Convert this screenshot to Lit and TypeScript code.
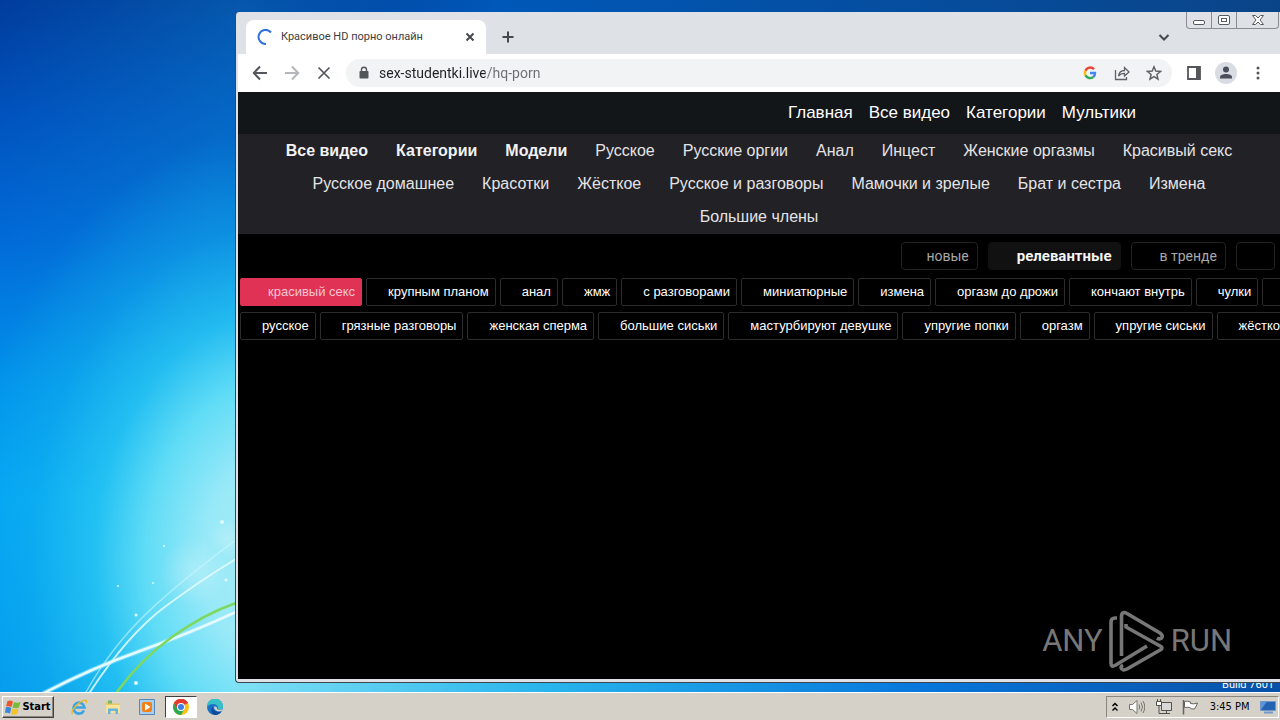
import { LitElement, html, css, svg } from "lit";
import { customElement } from "lit/decorators.js";
import { classMap } from "lit/directives/class-map.js";

@customElement("desk-wallpaper")
class DeskWallpaper extends LitElement {
  static styles = css`
    :host {
      display: block;
      background:
        radial-gradient(ellipse 320px 430px at 280px 560px, #a8ecf6 0%, #98e9f8 24%, #60dcf6 42%, #2ccaf4c0 58%, #18b8f060 78%, #14b8f000 100%),
        linear-gradient(100deg, #ffffff00 0px, #14a8dc40 240px, #ffffff00 560px),
        linear-gradient(180deg, #003c9c 0%, #0050bc 16%, #0068d8 35%, #0090ec 55%, #00a4f6 72%, #0096f0 100%);
    }
    .glow {
      display: block;
      width: 100%;
      height: 100%;
    }
  `;
  render() {
    return html`<svg class="glow" viewBox="0 0 1280 692" preserveAspectRatio="xMinYMax slice" aria-hidden="true">
      <defs>
        <linearGradient id="top" x1="0" x2="1"><stop offset="0" stop-color="#0048a8" stop-opacity="0" /><stop offset=".25" stop-color="#0058b8" /><stop offset="1" stop-color="#0a4488" /></linearGradient>
        <linearGradient id="low" x1="0" x2="1"><stop offset="0" stop-color="#7fe0f4" /><stop offset=".3" stop-color="#28b4ec" /><stop offset=".65" stop-color="#0878dc" /><stop offset="1" stop-color="#0850a8" /></linearGradient>
        <radialGradient id="orb"><stop offset="0" stop-color="#d8f6fa" stop-opacity=".35" /><stop offset="1" stop-color="#d8f6fa" stop-opacity="0" /></radialGradient>
      </defs>
      <rect x="236" width="1044" height="14" fill="url(#top)" />
      <rect x="236" y="680" width="1044" height="12" fill="url(#low)" />
      <circle cx="228" cy="538" r="20" fill="url(#orb)" />
      <circle cx="194" cy="572" r="34" fill="url(#orb)" />
      <g fill="none" stroke-linecap="round">
        <path d="M86 692Q112 646 148 612T236 540" stroke="#d0f6ff" stroke-width="1.5" opacity=".6" />
        <path d="M90 692Q128 634 166 606T236 559" stroke="#e4fbff" stroke-width="2" opacity=".85" />
        <path d="M44 693Q92 668 140 651T236 612" stroke="#a0eaff" stroke-width="5" opacity=".5" />
        <path d="M44 693Q92 668 140 651T236 612" stroke="#e4fbff" stroke-width="2.5" />
        <path d="M117 692Q140 660 172 637T236 603" stroke="#7ed860" stroke-width="2.5" />
      </g>
      <g fill="#dffaff">
        <circle cx="222" cy="522" r="2" /><circle cx="226" cy="580" r="1.5" /><circle cx="118" cy="586" r="1" />
        <circle cx="153" cy="583" r="1" /><circle cx="136" cy="615" r="1.5" /><circle cx="136" cy="683" r="2" /><circle cx="164" cy="546" r="1" />
      </g>
    </svg>`;
  }
}

@customElement("site-page")
class SitePage extends LitElement {
  static styles = css`
    :host {
      display: block;
      background: #000;
      overflow: hidden;
      font: 16px/20px "Liberation Sans", Arial, sans-serif;
    }
    a {
      color: inherit;
      text-decoration: none;
      white-space: nowrap;
    }
    .top {
      display: flex;
      justify-content: flex-end;
      gap: 16px;
      padding: 11px 144px 11px 0;
      background: #131619;
      color: #fff;
      font-size: 17px;
    }
    .cats {
      display: flex;
      flex-wrap: wrap;
      justify-content: center;
      padding-top: 1px;
      background: #222126;
      color: #e4e4e6;
    }
    .cats a {
      padding: 6px 14px 7px;
    }
    .cats .strong {
      font-weight: 700;
      color: #f2f2f4;
    }
    .sort {
      display: flex;
      justify-content: flex-end;
      gap: 10px;
      padding: 8px 5px;
      font: 14px/26px "Roboto", sans-serif;
      color: #a8a8a8;
    }
    .sort a {
      min-width: 1px;
      min-height: 26px;
      padding: 0 8px 0 28px;
      border: 1px solid #222;
      border-radius: 4px;
    }
    .sort a:first-child {
      padding-left: 24px;
    }
    .sort .strong {
      font-size: 15px;
      font-weight: 700;
      border-color: #111;
      color: #f4f4f4;
      background: #111;
    }
    .tags {
      display: flex;
      gap: 4px;
      padding: 0 0 6px 2px;
      font: 13px/26px "Liberation Sans", Arial, sans-serif;
      color: #fff;
    }
    .tags a {
      flex: none;
      padding: 0 6px 0 21px;
      border: 1px solid #2c2c2c;
      border-radius: 2px;
    }
    .tags .strong {
      padding-left: 27px;
      border-color: #e03255;
      background: #e03255;
      color: #f6c6d0;
    }
  `;
  links(items: string[], strong: string[] = []) {
    return items.map((t) => html`<a href="#" class=${classMap({ strong: strong.includes(t) })} aria-label=${t || "ещё"}>${t}</a>`);
  }
  render() {
    return html`
      <nav class="top">${this.links(["Главная", "Все видео", "Категории", "Мультики"])}</nav>
      <nav class="cats">
        ${this.links(
          ["Все видео", "Категории", "Модели", "Русское", "Русские оргии", "Анал", "Инцест", "Женские оргазмы", "Красивый секс", "Русское домашнее", "Красотки", "Жёсткое", "Русское и разговоры", "Мамочки и зрелые", "Брат и сестра", "Измена", "Большие члены"],
          ["Все видео", "Категории", "Модели"]
        )}
      </nav>
      <nav class="sort">${this.links(["новые", "релевантные", "в тренде", ""], ["релевантные"])}</nav>
      <nav class="tags">
        ${this.links(["красивый секс", "крупным планом", "анал", "жмж", "с разговорами", "миниатюрные", "измена", "оргазм до дрожи", "кончают внутрь", "чулки", ""], ["красивый секс"])}
      </nav>
      <nav class="tags">
        ${this.links(["русское", "грязные разговоры", "женская сперма", "большие сиськи", "мастурбируют девушке", "упругие попки", "оргазм", "упругие сиськи", "жёсткое"])}
      </nav>
    `;
  }
}

@customElement("browser-window")
class BrowserWindow extends LitElement {
  static styles = css`
    :host {
      display: flex;
      flex-direction: column;
      box-sizing: border-box;
      border: solid #3c4650;
      border-width: 0 0 1px 1px;
      border-radius: 4px 0 0 4px;
      background: #dee1e6;
      overflow: hidden;
      font: 11px/16px "Roboto", Tahoma, sans-serif;
    }
    button {
      display: grid;
      place-items: center;
      border: 0;
      padding: 0;
      background: none;
      color: #53575b;
    }
    svg {
      display: block;
    }
    .tabs {
      display: flex;
      align-items: flex-end;
      height: 42px;
      padding-left: 10px;
    }
    .tab {
      display: flex;
      align-items: center;
      box-sizing: border-box;
      width: 240px;
      height: 34px;
      padding: 0 8px 0 11px;
      gap: 8px;
      border-radius: 8px 8px 0 0;
      background: #fff;
      color: #3c4043;
    }
    .title {
      flex: 1;
      white-space: nowrap;
    }
    .add {
      width: 28px;
      height: 34px;
      margin-left: 8px;
    }
    .list {
      width: 28px;
      height: 34px;
      margin: 0 8px 0 auto;
    }
    .caps {
      display: flex;
      align-self: flex-start;
      margin-right: 1px;
      border: 1px solid #8a8e94;
      border-top: 0;
      border-radius: 0 0 4px 4px;
    }
    .caps button {
      width: 24px;
      height: 16px;
    }
    .caps button + button {
      width: 25px;
      border-left: 1px solid #8a8e94;
    }
    .caps button.shut {
      width: 42px;
    }
    .bar {
      display: flex;
      align-items: center;
      height: 38px;
      margin-left: 2px;
      padding: 0 6px;
      background: #fff;
    }
    .bar button {
      width: 32px;
      height: 28px;
    }
    .bar .dim {
      color: #b4b7ba;
    }
    .omni {
      display: flex;
      flex: 1;
      align-items: center;
      height: 28px;
      margin: 0 6px;
      padding: 0 2px 0 12px;
      border-radius: 14px;
      background: #f1f3f4;
    }
    .url {
      flex: 1;
      min-width: 0;
      margin-left: 9px;
      padding: 0;
      border: 0;
      outline: 0;
      font: 14px/20px "Roboto", sans-serif;
      background: linear-gradient(90deg, #202124 106px, #6b6f74 106px);
      -webkit-background-clip: text;
      background-clip: text;
      -webkit-text-fill-color: transparent;
    }
    .page {
      flex: 1;
      margin: 0 0 3px 2px;
    }
  `;
  render() {
    return html`
      <div class="tabs">
        <div class="tab">
          <svg width="16" height="16" fill="none" stroke="#2f6fd8" stroke-width="2"><path d="M14 3.500A7 7 0 1 0 9 14.900" /></svg>
          <span class="title">Красивое HD порно онлайн</span>
          <button aria-label="Close tab"><svg width="16" height="16" stroke="#45494d" stroke-width="2"><path d="M4.500 4.500l7 7M11.500 4.500l-7 7" /></svg></button>
        </div>
        <button class="add" aria-label="New tab"><svg width="16" height="16" stroke="#45494d" stroke-width="2"><path d="M8 2.500v11M2.500 8h11" /></svg></button>
        <button class="list" aria-label="Search tabs"><svg width="12" height="12" fill="none" stroke="#45494d" stroke-width="2"><path d="M1.500 4L6 8.500 10.500 4" /></svg></button>
        <div class="caps">
          <button aria-label="Minimize"><svg width="14" height="12" fill="#fff" stroke="#555a60"><rect x="1.500" y="6.500" width="11" height="4" rx="1.500" /></svg></button>
          <button aria-label="Restore"><svg width="14" height="12" fill="#fff" stroke="#555a60"><rect x="1.500" y="1.500" width="11" height="9" rx="1.500" /><rect x="4.500" y="4.500" width="5" height="3" /></svg></button>
          <button class="shut" aria-label="Close"><svg width="14" height="12" fill="#fff" stroke="#555a60"><path d="M1.500 1.500h3L7 4l2.500-2.500h3L9 6l3.500 4.500h-3L7 8l-2.500 2.500h-3L5 6z" /></svg></button>
        </div>
      </div>
      <div class="bar">
        <button aria-label="Back"><svg width="16" height="16" fill="none" stroke="currentColor" stroke-width="2"><path d="M15 8H2M8 1.500L1.800 8 8 14.500" /></svg></button>
        <button class="dim" aria-label="Forward"><svg width="16" height="16" fill="none" stroke="currentColor" stroke-width="2"><path d="M1 8h13M8 1.500L14.200 8 8 14.500" /></svg></button>
        <button aria-label="Stop"><svg width="16" height="16" stroke="currentColor" stroke-width="1.700"><path d="M2.500 2.500l11 11M13.500 2.500l-11 11" /></svg></button>
        <div class="omni">
          <svg width="12" height="14"><rect x="1.500" y="5" width="9" height="7.500" rx="1" fill="#53575b" /><path d="M3.500 5.500V3.700a2.500 2.500 0 0 1 5 0v1.800" fill="none" stroke="#53575b" stroke-width="1.400" /></svg>
          <input class="url" aria-label="Address" value="sex-studentki.live/hq-porn" />
          <button aria-label="Google"><svg width="14" height="14" fill="none" stroke-width="2.400"><path d="M11 3.300A5 5 0 0 0 2.500 4.700" stroke="#ea4335" /><path d="M2.500 4.700a5 5 0 0 0 0 4.600" stroke="#fbbc05" /><path d="M2.500 9.300a5 5 0 0 0 7.700 1.700" stroke="#34a853" /><path d="M10.200 11A5 5 0 0 0 12 7H7" stroke="#4285f4" /></svg></button>
          <button aria-label="Share"><svg width="16" height="16" fill="none" stroke="#5f6368" stroke-width="1.300"><path d="M1.500 5v9.500h11V12M4.500 11c.5-3.500 2.500-5.500 6-5.500V2.500L15 7l-4.500 4V8.300C8 8.300 6 9 4.500 11z" /></svg></button>
          <button aria-label="Bookmark"><svg width="16" height="16" fill="none" stroke="#5f6368" stroke-width="1.500"><path d="M8 1.800l1.800 4.300 4.700.4-3.600 3 1.100 4.600L8 11.600l-4 2.500 1.100-4.600-3.600-3 4.700-.4z" /></svg></button>
        </div>
        <button aria-label="Side panel"><svg width="16" height="16"><path d="M2 2h12v12H2z" fill="none" stroke="#53575b" stroke-width="1.800" /><path d="M10 2h4v12h-4z" fill="#53575b" /></svg></button>
        <button aria-label="Profile"><svg width="22" height="22"><circle cx="11" cy="11" r="11" fill="#dadce3" /><circle cx="11" cy="7.500" r="3" fill="#4a4f5a" /><path d="M5 16.500v-1.500c0-4 12-4 12 0v1.500z" fill="#4a4f5a" /></svg></button>
        <button aria-label="Menu"><svg width="16" height="16" fill="#53575b"><circle cx="8" cy="3" r="1.500" /><circle cx="8" cy="8" r="1.500" /><circle cx="8" cy="13" r="1.500" /></svg></button>
      </div>
      <site-page class="page"></site-page>
    `;
  }
}

const chromeIcon = svg`<circle cx="8" cy="8" r="8" fill="#fbc116"/><path d="M8 8L1 4.100A8 8 0 0 1 15 4.100z" fill="#e33b2e"/><path d="M1 4.100A8 8 0 0 0 8 16l3.500-6L5 10z" fill="#2da94f"/><path d="M8 4h7a8 8 0 0 0-14 .1L4.500 10z" fill="#e33b2e"/><circle cx="8" cy="8" r="4" fill="#fff"/><circle cx="8" cy="8" r="3" fill="#3b7de8"/>`;
const ieIcon = svg`<path d="M13 11.500A5.500 5.500 0 1 1 13.500 8.500H4" fill="none" stroke="#3aa5e0" stroke-width="2.600"/><path d="M1.500 15C-1 12 8 2 14 1.200c2-.2 1.500 2 .8 3" fill="none" stroke="#e8b830" stroke-width="1.400"/>`;
const folderIcon = svg`<path d="M1 3h5l1 1.500h8V9H1z" fill="#e8c860"/><path d="M3 1.500h4v3H3z" fill="#6cb86c"/><path d="M1 6h14v8H1z" fill="#f6e49a"/><path d="M3 15V9.500h10V15h-2.500v-3h-5v3z" fill="#68b4dc"/>`;
const playIcon = svg`<path d="M.5.500h15v15H.5z" fill="#a8d0ee" stroke="#5888b8"/><rect x="3" y="3" width="10" height="10" rx="2" fill="#f08018"/><path d="M6 4.500l5.500 3.500L6 11.500z" fill="#fff"/>`;
const edgeIcon = svg`<circle cx="8" cy="8" r="8" fill="#1a72c8"/><path d="M0 8a8 8 0 0 1 16-1c.3 3-3 4-5.500 3C12 7 9 5 6.500 5 3 5 .5 6.500 0 8z" fill="#38c0c8"/><path d="M6 7.500c-1 3 2 6.500 8.500 5A8 8 0 0 1 8 16c-4-1-5-6-2-8.500z" fill="#104a98"/><path d="M7 8c1.500-1 3.500 0 3 2 1.500 1.300 4 1 6-.5L14.500 12C10 13.500 7 11 7 8z" fill="#d5d1c8"/>`;

@customElement("task-bar")
class TaskBar extends LitElement {
  static styles = css`
    :host {
      display: flex;
      align-items: center;
      box-sizing: border-box;
      height: 28px;
      padding: 1px 0 0 2px;
      border-top: 1px solid #fff;
      background: #d5d1c9;
      font: 11px/16px "DejaVu Sans Condensed", Tahoma, sans-serif;
      color: #000;
    }
    svg {
      display: block;
    }
    button {
      display: grid;
      place-items: center;
      width: 32px;
      height: 22px;
      padding: 0;
      border: 0;
      background: none;
    }
    .start {
      display: flex;
      align-items: center;
      justify-content: center;
      gap: 1px;
      width: 52px;
      margin-right: 9px;
      border: 1px solid;
      border-color: #fff #404040 #404040 #fff;
      box-shadow: inset -1px -1px #8a867e;
      font: bold 11px/16px "DejaVu Sans Condensed", Tahoma, sans-serif;
    }
    .apps {
      display: flex;
      gap: 2px;
    }
    .apps .on {
      border: 1px solid;
      border-color: #404040 #fff #fff #404040;
      background: #fff;
    }
    .tray {
      display: flex;
      align-items: center;
      justify-content: space-between;
      box-sizing: border-box;
      height: 22px;
      width: 173px;
      margin: 0 1px 0 auto;
      padding: 0 2px 0 4px;
      border: 1px solid;
      border-color: #8a867e #fff #fff #8a867e;
    }
    .tray button {
      width: auto;
      height: 20px;
    }
  `;
  render() {
    const apps: [string, unknown][] = [["Internet Explorer", ieIcon], ["Explorer", folderIcon], ["Media Player", playIcon], ["Chrome", chromeIcon], ["Edge", edgeIcon]];
    return html`
      <button class="start">
        <svg width="16" height="16"><path d="M2.500 2C4.500 1 6 1.500 8 2.500L6.500 8C5 7 3 7 1 7.500z" fill="#e8562c" /><path d="M9 3c2 1 4 1 6.500 0L14 8.500c-2 1-4 1-6.500 0z" fill="#7cba3c" /><path d="M.8 8.500c2-.8 4-.5 5.500.5L5 14.500C3.500 13.500 1.500 13.500 0 14z" fill="#3c88d8" /><path d="M7.200 9.500c2 1 4 1 6.500 0L12 15c-2 1-4 .8-6 0z" fill="#f4c430" /></svg>
        Start
      </button>
      <div class="apps">
        ${apps.map(([name, icon]) => html`<button class=${classMap({ on: name === "Chrome" })} aria-label=${name}><svg width="16" height="16">${icon}</svg></button>`)}
      </div>
      <div class="tray">
        <button aria-label="Show hidden icons"><svg width="8" height="10" fill="none" stroke="#000" stroke-width="1.500"><path d="M1.500 4L4 1.500 6.500 4M1.500 8.500L4 6l2.500 2.500" /></svg></button>
        <button aria-label="Volume"><svg width="16" height="16" fill="#fff" stroke="#77746e"><path d="M.5 5.500h3L8 1.500v13L3.500 10.500h-3z" /><path d="M10 5.500q1.500 2.500 0 5M12 3.500q3 4.500 0 9M14 2q3.500 6 0 12" fill="none" /></svg></button>
        <button aria-label="Network"><svg width="16" height="16" fill="#fff" stroke="#55524e"><path d="M5.500 3.500h10v8h-10z" fill="#d8d8d8" /><path d="M8 14.500h6M10.500 12v2M3 7v7.500h5" fill="none" /><path d="M.5 2.500h5v4h-5zM1.500 0v2M4.500 0v2" /></svg></button>
        <button aria-label="Action Center"><svg width="17" height="16" fill="#fff" stroke="#66635e"><path d="M1.500 1v14.500" stroke-width="1.500" /><path d="M2.500 2.500q3-1 6 .5v1.500q3 1 7-.5-1 3-3 6-3 .5-5-1.500-2-.5-5 0z" /></svg></button>
        <span class="clock">3:45 PM</span>
        <button aria-label="Show desktop"><svg width="16" height="14"><path d="M.5 1.500h15v9H.5z" fill="#2462b4" stroke="#7098c8" /><path d="M1 10l6-8.500H1z" fill="#5c94d8" /><path d="M4 12.500h9" stroke="#7098c8" stroke-width="2" /></svg></button>
      </div>
    `;
  }
}

@customElement("app-root")
class AppRoot extends LitElement {
  static styles = css`
    :host {
      display: flex;
      flex-direction: column;
      height: 100vh;
      overflow: hidden;
    }
    .desk {
      position: relative;
      flex: 1;
      min-height: 0;
    }
    .paper {
      height: 100%;
    }
    .build {
      position: absolute;
      right: 6px;
      bottom: 0;
      font: 11px/14px "Roboto", Tahoma, sans-serif;
      color: #fff;
    }
    .window {
      position: absolute;
      inset: 12px 0 9px 235px;
    }
    .mark {
      position: absolute;
      right: 48px;
      bottom: 20px;
      display: flex;
      align-items: center;
      gap: 6px;
      color: #777;
      font: 31px/62px "Roboto", sans-serif;
    }
    .mark svg {
      display: block;
    }
  `;
  render() {
    return html`
      <div class="desk">
        <desk-wallpaper class="paper"></desk-wallpaper>
        <span class="build">Build 7601</span>
        <browser-window class="window"></browser-window>
        <div class="mark">
          <span>ANY</span>
          <svg width="56" height="63" fill="none" stroke="#777" stroke-width="3.600" stroke-linejoin="round"><path d="M8 9H6Q2 9 2 13V54Q2 58.500 6 56.500L38 37" /><path d="M12.500 47V8Q12.500 1.500 18 4.500L51 24Q55 27 52 29.500Q50 30.500 48 29" /><path d="M17 15V18L52 37.500Q54 39 52 40.500L18 60Q13 62.500 12 58.500Q12 57 14 56" /></svg>
          <span>RUN</span>
        </div>
      </div>
      <task-bar></task-bar>
    `;
  }
}
